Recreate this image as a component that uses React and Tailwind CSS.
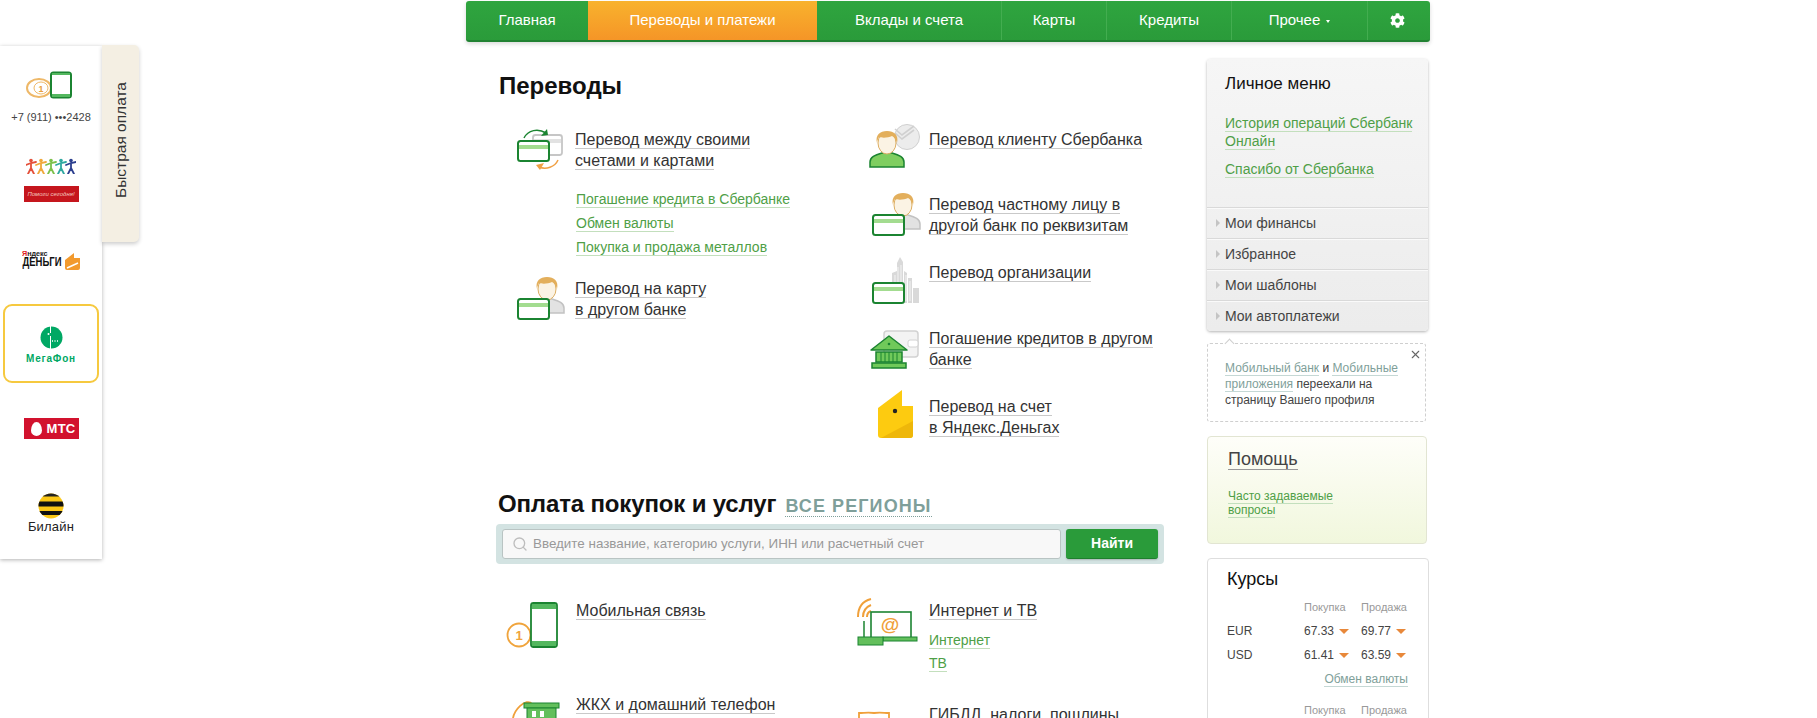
import React from "react";
import { Search, X } from "lucide-react";
import { FaCog } from "react-icons/fa";

const GREEN = "#1b8431";
const BAND = "#a3dc90";

// small svg helpers, all icons are drawn in page coordinates through the viewBox
function Ic({ x, y, w = 70, h = 60, children }) {
  return (
    <svg viewBox={`${x} ${y} ${w} ${h}`} width={w} height={h} className="block shrink-0 overflow-visible">
      {children}
    </svg>
  );
}

function Card({ x, y, w = 31, h = 20 }) {
  return (
    <g>
      <rect x={x} y={y} width={w} height={h} rx="2.5" fill="#fff" stroke={GREEN} strokeWidth="2" />
      <rect x={x + 1} y={y + 4} width={w - 2} height="4" fill={BAND} />
    </g>
  );
}

function Person({ cx, top, body = "#e2e2e2", line = "#c2c2c2" }) {
  return (
    <g>
      <path d={`M${cx - 17} ${top + 36}v-5c0-5 5-7 12-9h10c7 2 12 4 12 9v5z`} fill={body} stroke={line} strokeWidth="1.5" />
      <ellipse cx={cx} cy={top + 12} rx="9" ry="11" fill="#fbf3e4" stroke="#dcae62" strokeWidth="1" />
      <path d={`M${cx - 10} ${top + 12}c-2-8 3-12 10-12 7 0 12 4 10 12-1-4-3-6-5-7-4 2-10 2-13 1-1 2-2 4-2 6z`} fill="#e3af5c" />
    </g>
  );
}

function Transfer() {
  return (
    <Ic x={505} y={129}>
      <rect x="533" y="135" width="29" height="20" rx="2.5" fill="#fff" stroke="#c6c6c6" strokeWidth="1.8" />
      <rect x="534" y="139" width="27" height="4" fill="#e2e2e2" />
      <Card x={518} y={141} />
      <path d="M524 138c4-8 14-10 22-5" fill="none" stroke={GREEN} strokeWidth="1.5" />
      <path d="M541 136l7-1-1-6z" fill={GREEN} />
      <path d="M558 160c-3 7-12 10-19 7" fill="none" stroke="#f0a044" strokeWidth="1.5" />
      <path d="M544 163l-8 2 4 5z" fill="#f0a044" />
    </Ic>
  );
}

function CardPerson() {
  return (
    <Ic x={505} y={278}>
      <Person cx={547} top={277} />
      <Card x={518} y={299} />
    </Ic>
  );
}

function Client() {
  return (
    <Ic x={870} y={129} w={59}>
      <circle cx="907" cy="137" r="12.5" fill="#ececec" stroke="#d0d0d0" />
      <path d="M895 129l7 6 12-9M895 133l7 6 12-9" fill="none" stroke="#d0d0d0" strokeWidth="1.6" />
      <Person cx={887} top={131} body="#7fce60" line={GREEN} />
    </Ic>
  );
}

function PersonCard2() {
  return (
    <Ic x={870} y={195} w={59}>
      <Person cx={903} top={194} />
      <Card x={873} y={216} />
    </Ic>
  );
}

function Org() {
  return (
    <Ic x={870} y={263} w={59}>
      <path d="M892 304v-30l5-2v-8l3-6 3 5v41zM904 304v-32l3 2v30zM908 304v-25h4v25zM913 304v-15h6v15z" fill="#d9d9d9" />
      <path d="M895 276v26M898 268v34M901 266v36M906 276v26M910 282v20" stroke="#f4f4f4" strokeWidth="1" />
      <Card x={873} y={284} />
    </Ic>
  );
}

function Bank() {
  return (
    <Ic x={870} y={328} w={59}>
      <rect x="884" y="331" width="34" height="26" rx="3" fill="#f3f3f3" stroke="#d2d2d2" strokeWidth="1.5" />
      <rect x="908" y="340" width="10" height="7" rx="2" fill="#fff" stroke="#d2d2d2" />
      <path d="M889 336l18 14H871z" fill="#70c95a" stroke={GREEN} strokeWidth="1.5" strokeLinejoin="round" />
      <circle cx="889" cy="344" r="1.3" fill={GREEN} />
      <rect x="876" y="352" width="26" height="10" fill="#70c95a" stroke={GREEN} strokeWidth="1.5" />
      <path d="M881 352v10M885 352v10M889 352v10M893 352v10M897 352v10" stroke={GREEN} strokeWidth="1" />
      <rect x="872" y="363" width="34" height="5" fill="#70c95a" stroke={GREEN} strokeWidth="1.5" />
    </Ic>
  );
}

function YaWallet() {
  return (
    <Ic x={870} y={396} w={59}>
      <path d="M878 408l24-18v16h11v29a3 3 0 0 1-3 3h-29a3 3 0 0 1-3-3z" fill="#fdcb10" />
      <path d="M881 438l32-17v14a3 3 0 0 1-3 3z" fill="#eeb70a" />
      <circle cx="895" cy="411" r="2.2" fill="#222" />
    </Ic>
  );
}

function Mobile() {
  return (
    <Ic x={506} y={601}>
      <circle cx="519" cy="636" r="11.5" fill="#fff" stroke="#f0a43c" strokeWidth="1.8" />
      <text x="519" y="641" textAnchor="middle" fontSize="13" fontWeight="700" fill="#f0a43c">1</text>
      <rect x="531" y="604" width="26" height="44" rx="2.5" fill="#fff" stroke={GREEN} strokeWidth="1.8" />
      <rect x="532" y="605" width="24" height="5" fill="#54b85f" />
      <rect x="532" y="642" width="24" height="5" fill="#54b85f" />
    </Ic>
  );
}

function Internet() {
  return (
    <Ic x={870} y={601} w={59}>
      <path d="M858 618c0-11 5-16 13-18M863 618c0-6 3-10 8-12M867 618c0-3 1-5 4-6" fill="none" stroke="#f0a03a" strokeWidth="2" />
      <rect x="871" y="613" width="40" height="27" fill="#fff" stroke={GREEN} strokeWidth="1.6" />
      <text x="890" y="632" textAnchor="middle" fontSize="19" fontWeight="700" fill="#f0a03a">@</text>
      <rect x="883" y="638" width="34" height="4" fill="#63bf5c" stroke={GREEN} strokeWidth="1" />
      <path d="M864 622v16" stroke={GREEN} strokeWidth="1.5" />
      <rect x="858" y="638" width="25" height="8" fill="#63bf5c" stroke={GREEN} strokeWidth="1" />
    </Ic>
  );
}

function Zhkh() {
  return (
    <Ic x={506} y={695}>
      <path d="M513 740c-8-2-8-14 0-15-2-14 14-27 19-20" fill="none" stroke="#f0a03a" strokeWidth="1.8" />
      <rect x="524" y="704" width="35" height="5" fill="#63bf5c" stroke={GREEN} strokeWidth="1" />
      <rect x="527" y="709" width="29" height="30" fill="#63bf5c" stroke={GREEN} strokeWidth="1" />
      <rect x="532" y="712" width="4" height="6" fill="#fff" />
      <rect x="540" y="712" width="4" height="6" fill="#fff" />
    </Ic>
  );
}

function Shield() {
  return (
    <Ic x={870} y={705} w={59}>
      <path d="M859 714c5 0 9-1 15 0 6-1 10 0 15 0v16l-15 12-15-12z" fill="#fff" stroke="#f0a03a" strokeWidth="1.8" />
    </Ic>
  );
}

const A = ({ children }) => (
  <span className="border-b border-[#c9c9c9] text-[#333]">{children}</span>
);
const L = ({ children }) => (
  <span className="border-b border-[#c3dfbd] text-[#4f9f47]">{children}</span>
);
const M = ({ children }) => (
  <span className="border-b border-[#c5d8d5] text-[#7f9f9a]">{children}</span>
);

// the icon box has no height of its own, a drawing may hang out of the text row
function Item({ icon, children, className = "" }) {
  return (
    <div className={`flex text-[16px] leading-[21px] ${className}`}>
      <div className="h-0 self-start">{icon}</div>
      <div className="whitespace-nowrap">{children}</div>
    </div>
  );
}

function NavBar() {
  return (
    <nav className="flex h-[41px] mt-px rounded-[3px] bg-gradient-to-b from-[#2fa53f] to-[#2a9b3a] border-b-2 border-[#218232] shadow-[0_2px_4px_rgba(0,0,0,0.15)] text-[15px] text-white">
      <div className="w-[122px] flex items-center justify-center rounded-l-[3px]">Главная</div>
      <div className="w-[229px] flex items-center justify-center bg-gradient-to-b from-[#f8b22d] to-[#f59527]">Переводы и платежи</div>
      <div className="w-[184px] flex items-center justify-center">Вклады и счета</div>
      <div className="w-[105px] flex items-center justify-center border-l border-[#43ad50]">Карты</div>
      <div className="w-[125px] flex items-center justify-center border-l border-[#43ad50]">Кредиты</div>
      <div className="w-[136px] flex items-center justify-center gap-[6px] border-l border-[#43ad50]">
        Прочее
        <span className="w-0 h-0 mt-[2px] border-x-[2px] border-t-[3px] border-x-transparent border-t-white" />
      </div>
      <div className="w-[63px] flex items-center justify-center border-l border-[#43ad50] pr-[4px]">
        <FaCog size={15} />
      </div>
    </nav>
  );
}

function Kid({ x, color }) {
  return (
    <g stroke={color} strokeWidth="1.8" fill="none" strokeLinecap="round">
      <circle cx={x} cy="2.5" r="1.8" fill={color} stroke="none" />
      <path d={`M${x} 5v5M${x - 5} 7l5-2 5-1M${x} 10l-3 6M${x} 10l3 6`} />
    </g>
  );
}

function QuickPay() {
  return (
    <aside className="absolute left-0 top-[46px] w-[102px] h-[513px] bg-white shadow-[0_1px_4px_rgba(0,0,0,0.3)] flex flex-col items-center">
      <div className="absolute left-full -top-px w-[37px] h-[197px] bg-[#f4efe3] rounded-r-[5px] shadow-[0_2px_4px_rgba(0,0,0,0.2)] flex items-center justify-center pb-[8px]">
        <span className="[writing-mode:vertical-rl] rotate-180 text-[15.5px] text-[#333]">Быстрая оплата</span>
      </div>

      <svg width="50" height="28" viewBox="0 0 50 28" className="mt-[25px]">
        <ellipse cx="13" cy="17" rx="12" ry="9" fill="#fff" stroke="#eeb868" strokeWidth="2" />
        <ellipse cx="15" cy="17" rx="7" ry="6" fill="#fff" stroke="#eeb868" strokeWidth="1" />
        <text x="15" y="20.5" textAnchor="middle" fontSize="9" fontWeight="700" fill="#e8a040">1</text>
        <rect x="25" y="1.5" width="20" height="25" rx="2.5" fill="#fff" stroke={GREEN} strokeWidth="2" />
        <rect x="26" y="2" width="18" height="2" fill="#54b85f" />
        <rect x="26" y="23" width="18" height="3" fill="#54b85f" />
      </svg>
      <div className="mt-[11px] text-[11px] leading-[14px] text-[#444] whitespace-nowrap">+7 (911) •••2428</div>

      <svg width="50" height="16" viewBox="0 0 50 16" className="mt-[34px]">
        <Kid x={5} color="#e4503a" />
        <Kid x={15} color="#f0a83a" />
        <Kid x={25} color="#7cc04a" />
        <Kid x={35} color="#2fa8a0" />
        <Kid x={45} color="#2c3f8f" />
      </svg>
      <div className="mt-[12px] w-[55px] h-[16px] bg-[#c5161d] flex items-center justify-center text-[6px] italic text-[#f5c9c0] whitespace-nowrap">Помоги сегодня!</div>

      <div className="mt-[47px] flex items-end gap-[3px]">
        <div className="flex flex-col">
          <span className="text-[8px] leading-[9px] font-bold text-[#222] scale-x-90 origin-left"><span className="text-[#e02020]">Я</span>ндекс</span>
          <span className="text-[9.5px] leading-[12px] font-bold text-[#111] whitespace-nowrap scale-y-125 origin-bottom">ДЕНЬГИ</span>
        </div>
        <svg width="15" height="17" viewBox="0 0 15 17">
          <path d="M0 7l9-7v5h6v10a2 2 0 0 1-2 2H2a2 2 0 0 1-2-2z" fill="#f29a2e" />
          <path d="M2 15l11-5" stroke="#fff" strokeWidth="1.5" />
        </svg>
      </div>

      <div className="mt-[34px] w-[96px] h-[79px] shrink-0 border-2 border-[#f6c93f] rounded-[9px] flex flex-col items-center pt-[20px]">
        <svg width="23" height="23" viewBox="0 0 23 23">
          <circle cx="11.5" cy="11.5" r="11" fill="#00a864" />
          <path d="M10.5 0v7M10.5 10v13" stroke="#fff" strokeWidth="1" />
          <circle cx="8.5" cy="8" r="1" fill="#fff" />
          <path d="M12 15h1M14.5 15h1M17 15h1" stroke="#fff" strokeWidth="1.6" />
        </svg>
        <span className="mt-[4px] text-[10px] leading-[12px] font-bold tracking-[0.8px] text-[#00a864]">МегаФон</span>
      </div>

      <div className="mt-[35px] w-[55px] h-[21px] shrink-0 bg-[#d2122e] flex items-center">
        <span className="ml-[7px] w-[11px] h-[14px] bg-white rounded-[50%_50%_50%_50%/60%_60%_40%_40%]" />
        <span className="ml-[5px] text-[13px] font-bold text-white leading-none tracking-[0.3px]">МТС</span>
      </div>

      <svg width="26" height="26" viewBox="0 0 26 26" className="mt-[54px] shrink-0">
        <defs>
          <clipPath id="bee"><circle cx="13" cy="13" r="12.5" /></clipPath>
        </defs>
        <g clipPath="url(#bee)">
          <rect width="26" height="26" fill="#fbc716" />
          <rect y="0" width="26" height="3.5" fill="#222" />
          <rect y="8.5" width="26" height="5" fill="#111" />
          <rect y="18" width="26" height="4" fill="#111" />
        </g>
      </svg>
      <div className="text-[13px] tracking-[0.2px] leading-[16px] text-[#222]">Билайн</div>
    </aside>
  );
}

function Rate({ value }) {
  return (
    <div className="flex items-center gap-[5px]">
      {value}
      <span className="w-0 h-0 border-x-[5px] border-t-[5px] border-x-transparent border-t-[#e8883a]" />
    </div>
  );
}

function Sidebar() {
  const rows = ["Мои финансы", "Избранное", "Мои шаблоны", "Мои автоплатежи"];
  return (
    <aside className="w-[223px] shrink-0 pt-[17px] text-[#333]">
      <div className="w-[221px] rounded-[4px] bg-gradient-to-b from-[#f6f6f6] to-[#ececec] shadow-[0_1px_3px_rgba(0,0,0,0.3)]">
        <div className="h-[148px] pl-[18px] pt-[15px]">
          <div className="text-[17px] leading-[20px] text-[#111]">Личное меню</div>
          <div className="mt-[20px] text-[14px] leading-[18px]"><L>История операций Сбербанк Онлайн</L></div>
          <div className="mt-[10px] text-[14px] leading-[18px]"><L>Спасибо от Сбербанка</L></div>
        </div>
        {rows.map((r) => (
          <div key={r} className="h-[31px] flex items-center border-t border-[#d9d9d9] pl-[9px] text-[14px] text-[#444] shadow-[inset_0_1px_0_#fafafa]">
            <span className="w-0 h-0 mr-[5px] border-y-[4px] border-l-[4px] border-y-transparent border-l-[#c4c4c4]" />
            {r}
          </div>
        ))}
      </div>

      <div className="relative mt-[12px] w-[219px] h-[79px] border border-dashed border-[#cfcfcf] rounded-[3px] pl-[17px] pt-[16px] text-[12px] leading-[16px] text-[#444]">
        <span className="absolute left-[18px] -top-[4px] w-[7px] h-[7px] rotate-45 bg-white border-l border-t border-[#cfcfcf]" />
        <X size={13} className="absolute right-[3px] top-[4px] text-[#666]" />
        <M>Мобильный банк</M> и <M>Мобильные</M>
        <br />
        <M>приложения</M> переехали на
        <br />
        страницу Вашего профиля
      </div>

      <div className="mt-[14px] w-[220px] h-[108px] rounded-[4px] border border-[#e2e5d2] bg-gradient-to-b from-[#fefef9] to-[#f1f7dd] pl-[20px] pt-[11px]">
        <div className="text-[18px] leading-[22px]"><span className="border-b border-[#999] text-[#444]">Помощь</span></div>
        <div className="mt-[19px] text-[12px] leading-[14px]">
          <L>Часто задаваемые</L>
          <br />
          <L>вопросы</L>
        </div>
      </div>

      <div className="mt-[14px] w-[222px] h-[200px] rounded-[4px] border border-[#dedede] pl-[19px] pt-[9px] text-[12px] text-[#444]">
        <div className="text-[18px] leading-[22px] text-[#111]">Курсы</div>
        <div className="mt-[5px] grid grid-cols-[77px_57px_50px] items-center">
          <div />
          <div className="h-[24px] leading-[24px] text-[11px] text-[#999]">Покупка</div>
          <div className="text-[11px] text-[#999]">Продажа</div>
          <div className="h-[24px] leading-[24px]">EUR</div>
          <Rate value="67.33" />
          <Rate value="69.77" />
          <div className="h-[24px] leading-[24px]">USD</div>
          <Rate value="61.41" />
          <Rate value="63.59" />
        </div>
        <div className="h-[24px] leading-[24px] w-[181px] text-right"><M>Обмен валюты</M></div>
        <div className="mt-[11px] grid grid-cols-[77px_57px_50px] text-[11px] text-[#999]">
          <div />
          <div>Покупка</div>
          <div>Продажа</div>
        </div>
      </div>
    </aside>
  );
}

export default function App() {
  return (
    <div className="relative h-[718px] overflow-hidden bg-white font-['Liberation_Sans',Arial,sans-serif]">
      <QuickPay />
      <div className="ml-[466px] w-[964px]">
        <NavBar />
        <div className="flex">
          <main className="w-[741px] shrink-0">
            <h1 className="mt-[30px] ml-[33px] text-[24px] leading-[28px] font-bold text-[#111]">Переводы</h1>

            <div className="mt-[29px] flex">
              <div className="ml-[39px] w-[365px]">
                <Item icon={<Transfer />}>
                  <A>Перевод между своими</A><br /><A>счетами и картами</A>
                </Item>
                <div className="mt-[16px] ml-[71px] text-[14px]">
                  <div className="h-[24px] leading-[24px]"><L>Погашение кредита в Сбербанке</L></div>
                  <div className="h-[24px] leading-[24px]"><L>Обмен валюты</L></div>
                  <div className="h-[24px] leading-[24px]"><L>Покупка и продажа металлов</L></div>
                </div>
                <Item className="mt-[19px]" icon={<CardPerson />}>
                  <A>Перевод на карту</A><br /><A>в другом банке</A>
                </Item>
              </div>
              <div className="h-[308px]">
                <Item icon={<Client />}><A>Перевод клиенту Сбербанка</A></Item>
                <Item className="mt-[44px]" icon={<PersonCard2 />}>
                  <A>Перевод частному лицу в</A><br /><A>другой банк по реквизитам</A>
                </Item>
                <Item className="mt-[26px]" icon={<Org />}><A>Перевод организации</A></Item>
                <Item className="mt-[45px]" icon={<Bank />}>
                  <A>Погашение кредитов в другом</A><br /><A>банке</A>
                </Item>
                <Item className="mt-[26px]" icon={<YaWallet />}>
                  <A>Перевод на счет</A><br /><A>в Яндекс.Деньгах</A>
                </Item>
              </div>
            </div>

            <h2 className="mt-[53px] ml-[32px] h-[28px] leading-[28px] text-[24px] tracking-[-0.15px] font-bold text-[#111] flex items-baseline gap-[9px]">
              Оплата покупок и услуг
              <span className="text-[18px] tracking-[1.1px] text-[#7f9f9a] border-b border-dotted border-[#7f9f9a] leading-[20px]">ВСЕ РЕГИОНЫ</span>
            </h2>

            <div className="mt-[6px] ml-[30px] w-[668px] h-[40px] rounded-[4px] bg-[#d3e3e2] flex items-center px-[6px] gap-[5px]">
              <div className="w-[559px] h-[30px] rounded-[3px] border border-[#b9c4c3] bg-[#f8f8f8] flex items-center pl-[9px] gap-[5px] text-[13.4px] text-[#999]">
                <Search size={16} className="text-[#bdbdbd]" />
                Введите название, категорию услуги, ИНН или расчетный счет
              </div>
              <div className="w-[92px] h-[30px] rounded-[3px] bg-[#2a9b3a] border-b border-[#1f7f2e] shadow-[0_1px_2px_rgba(0,0,0,0.2)] flex items-center justify-center text-[14px] font-bold text-white">Найти</div>
            </div>

            <div className="mt-[36px] flex">
              <div className="ml-[40px] w-[364px]">
                <Item icon={<Mobile />}><A>Мобильная связь</A></Item>
                <Item className="mt-[73px]" icon={<Zhkh />}><A>ЖКХ и домашний телефон</A></Item>
              </div>
              <div>
                <Item icon={<Internet />}><A>Интернет и ТВ</A></Item>
                <div className="mt-[8px] ml-[59px] text-[14px]">
                  <div className="h-[23px] leading-[22px]"><L>Интернет</L></div>
                  <div className="h-[22px] leading-[22px]"><L>ТВ</L></div>
                </div>
                <Item className="mt-[30px]" icon={<Shield />}><A>ГИБДД, налоги, пошлины</A></Item>
              </div>
            </div>
          </main>
          <Sidebar />
        </div>
      </div>
    </div>
  );
}
